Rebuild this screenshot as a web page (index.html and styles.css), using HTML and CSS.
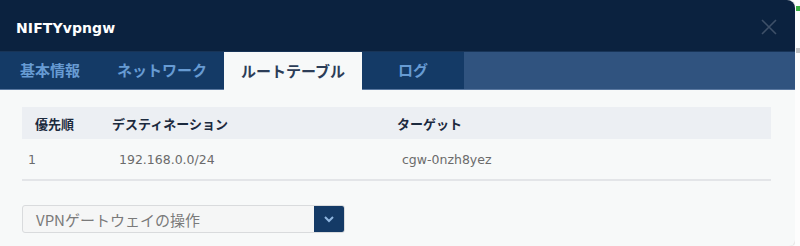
FILE: index.html
```html
<!DOCTYPE html>
<html lang="ja">
<head>
<meta charset="utf-8">
<link rel="stylesheet" href="styles.css">
</head>
<body>
<div class="page">
  <div class="modal">
    <div class="modal-header">
      <div class="title">NIFTYvpngw</div>
      <div class="close">
        <svg width="16" height="16" viewBox="0 0 16 16"><path d="M1 1L15 15M15 1L1 15" stroke="#3e5068" stroke-width="1.6" fill="none"/></svg>
      </div>
    </div>
    <div class="tabs">
      <div class="tab t1">基本情報</div>
      <div class="tab t2">ネットワーク</div>
      <div class="tab t3 active">ルートテーブル</div>
      <div class="tab t4">ログ</div>
      <div class="tab-fill"></div>
    </div>
    <div class="modal-body">
      <table class="routes">
        <thead>
          <tr><th class="c1">優先順</th><th class="c2">デスティネーション</th><th class="c3">ターゲット</th></tr>
        </thead>
        <tbody>
          <tr><td class="c1">1</td><td class="c2">192.168.0.0/24</td><td class="c3">cgw-0nzh8yez</td></tr>
        </tbody>
      </table>
      <div class="select">
        <div class="select-text">VPNゲートウェイの操作</div>
        <div class="select-btn">
          <svg width="12" height="8" viewBox="0 0 12 8"><path d="M2 2L6 6L10 2" stroke="#8fb6e0" stroke-width="2" fill="none"/></svg>
        </div>
      </div>
    </div>
  </div>
  <div class="side">
    <div class="side-green"></div>
    <div class="side-grey"></div>
  </div>
</div>
</body>
</html>
```
FILE: styles.css
```css
html, body {
  margin: 0;
  padding: 0;
  background: #ffffff;
}
body {
  font-family: "DejaVu Sans", "Noto Sans CJK JP", sans-serif;
  width: 800px;
  height: 246px;
  overflow: hidden;
}
.page {
  display: flex;
  height: 246px;
}
.modal {
  width: 795px;
  height: 246px;
  background: #f7f9f9;
  border-radius: 0 8px 6px 0;
  overflow: hidden;
  box-shadow: 1px 0 2px rgba(0,0,0,0.15);
  display: flex;
  flex-direction: column;
}
.modal-header {
  height: 51px;
  background: #0b223f;
  display: flex;
  align-items: center;
  justify-content: space-between;
  padding: 0 18px 0 16px;
  box-sizing: border-box;
}
.title {
  color: #ffffff;
  font-weight: bold;
  font-size: 14px;
  letter-spacing: 0.1px;
  padding-top: 4px;
}
.close {
  display: flex;
  padding-top: 2px;
}
.tabs {
  height: 39px;
  display: flex;
  background: #30537f;
  border-top: 1px solid #183457;
  border-bottom: 1px solid #5a78a0;
  box-sizing: border-box;
}
.tab {
  box-sizing: border-box;
  display: flex;
  align-items: center;
  justify-content: center;
  background: #143a66;
  color: #679bd3;
  font-family: "Noto Sans CJK JP", sans-serif;
  font-weight: bold;
  font-size: 15px;
  padding-bottom: 2px;
}
.t1 { width: 100px; }
.t2 { width: 124px; }
.t3 { width: 138px; }
.t4 { width: 102px; }
.tab.active {
  background: #f7f9f9;
  color: #2c3d57;
  margin-bottom: -1px;
}
.tab-fill { flex: 1; }
.modal-body {
  padding: 17px 24px 0 22px;
}
.routes {
  width: 749px;
  border-collapse: collapse;
  font-family: "Noto Sans CJK JP", sans-serif;
  font-size: 13px;
}
.routes th {
  background: #eceff3;
  height: 32px;
  text-align: left;
  font-weight: bold;
  color: #1c2a3e;
  padding: 0;
}
.routes td {
  height: 40px;
  color: #6b6b6b;
  padding: 0;
  font-family: "DejaVu Sans", sans-serif;
  font-size: 12.5px;
  border-bottom: 2px solid #e3e5e8;
}
.routes th.c1 { padding-left: 13px; width: 77px; }
.routes th.c2 { padding-left: 0; width: 285px; }
.routes td.c1 { padding-left: 6px; }
.routes td.c2 { padding-left: 7px; }
.routes td.c3 { padding-left: 5px; }
.select {
  margin-top: 24px;
  width: 323px;
  height: 28px;
  display: flex;
  border: 1px solid #d9dbdd;
  border-radius: 3px;
  box-sizing: border-box;
  background: #f5f6f6;
  overflow: hidden;
}
.select-text {
  flex: 1;
  display: flex;
  align-items: center;
  padding-left: 13px;
  color: #7a7a7a;
  font-family: "Noto Sans CJK JP", sans-serif;
  font-size: 15px;
}
.select-btn {
  width: 30px;
  background: #143a66;
  display: flex;
  align-items: center;
  justify-content: center;
}
.side {
  flex: 1;
  position: relative;
  background: #fdfdfd;
}
.side-green {
  margin: 6px 0 0 1px;
  height: 5px;
  background: #3cb043;
}
.side-grey {
  margin: 37px 0 0 1px;
  height: 5px;
  background: #c8c8c8;
}
```
